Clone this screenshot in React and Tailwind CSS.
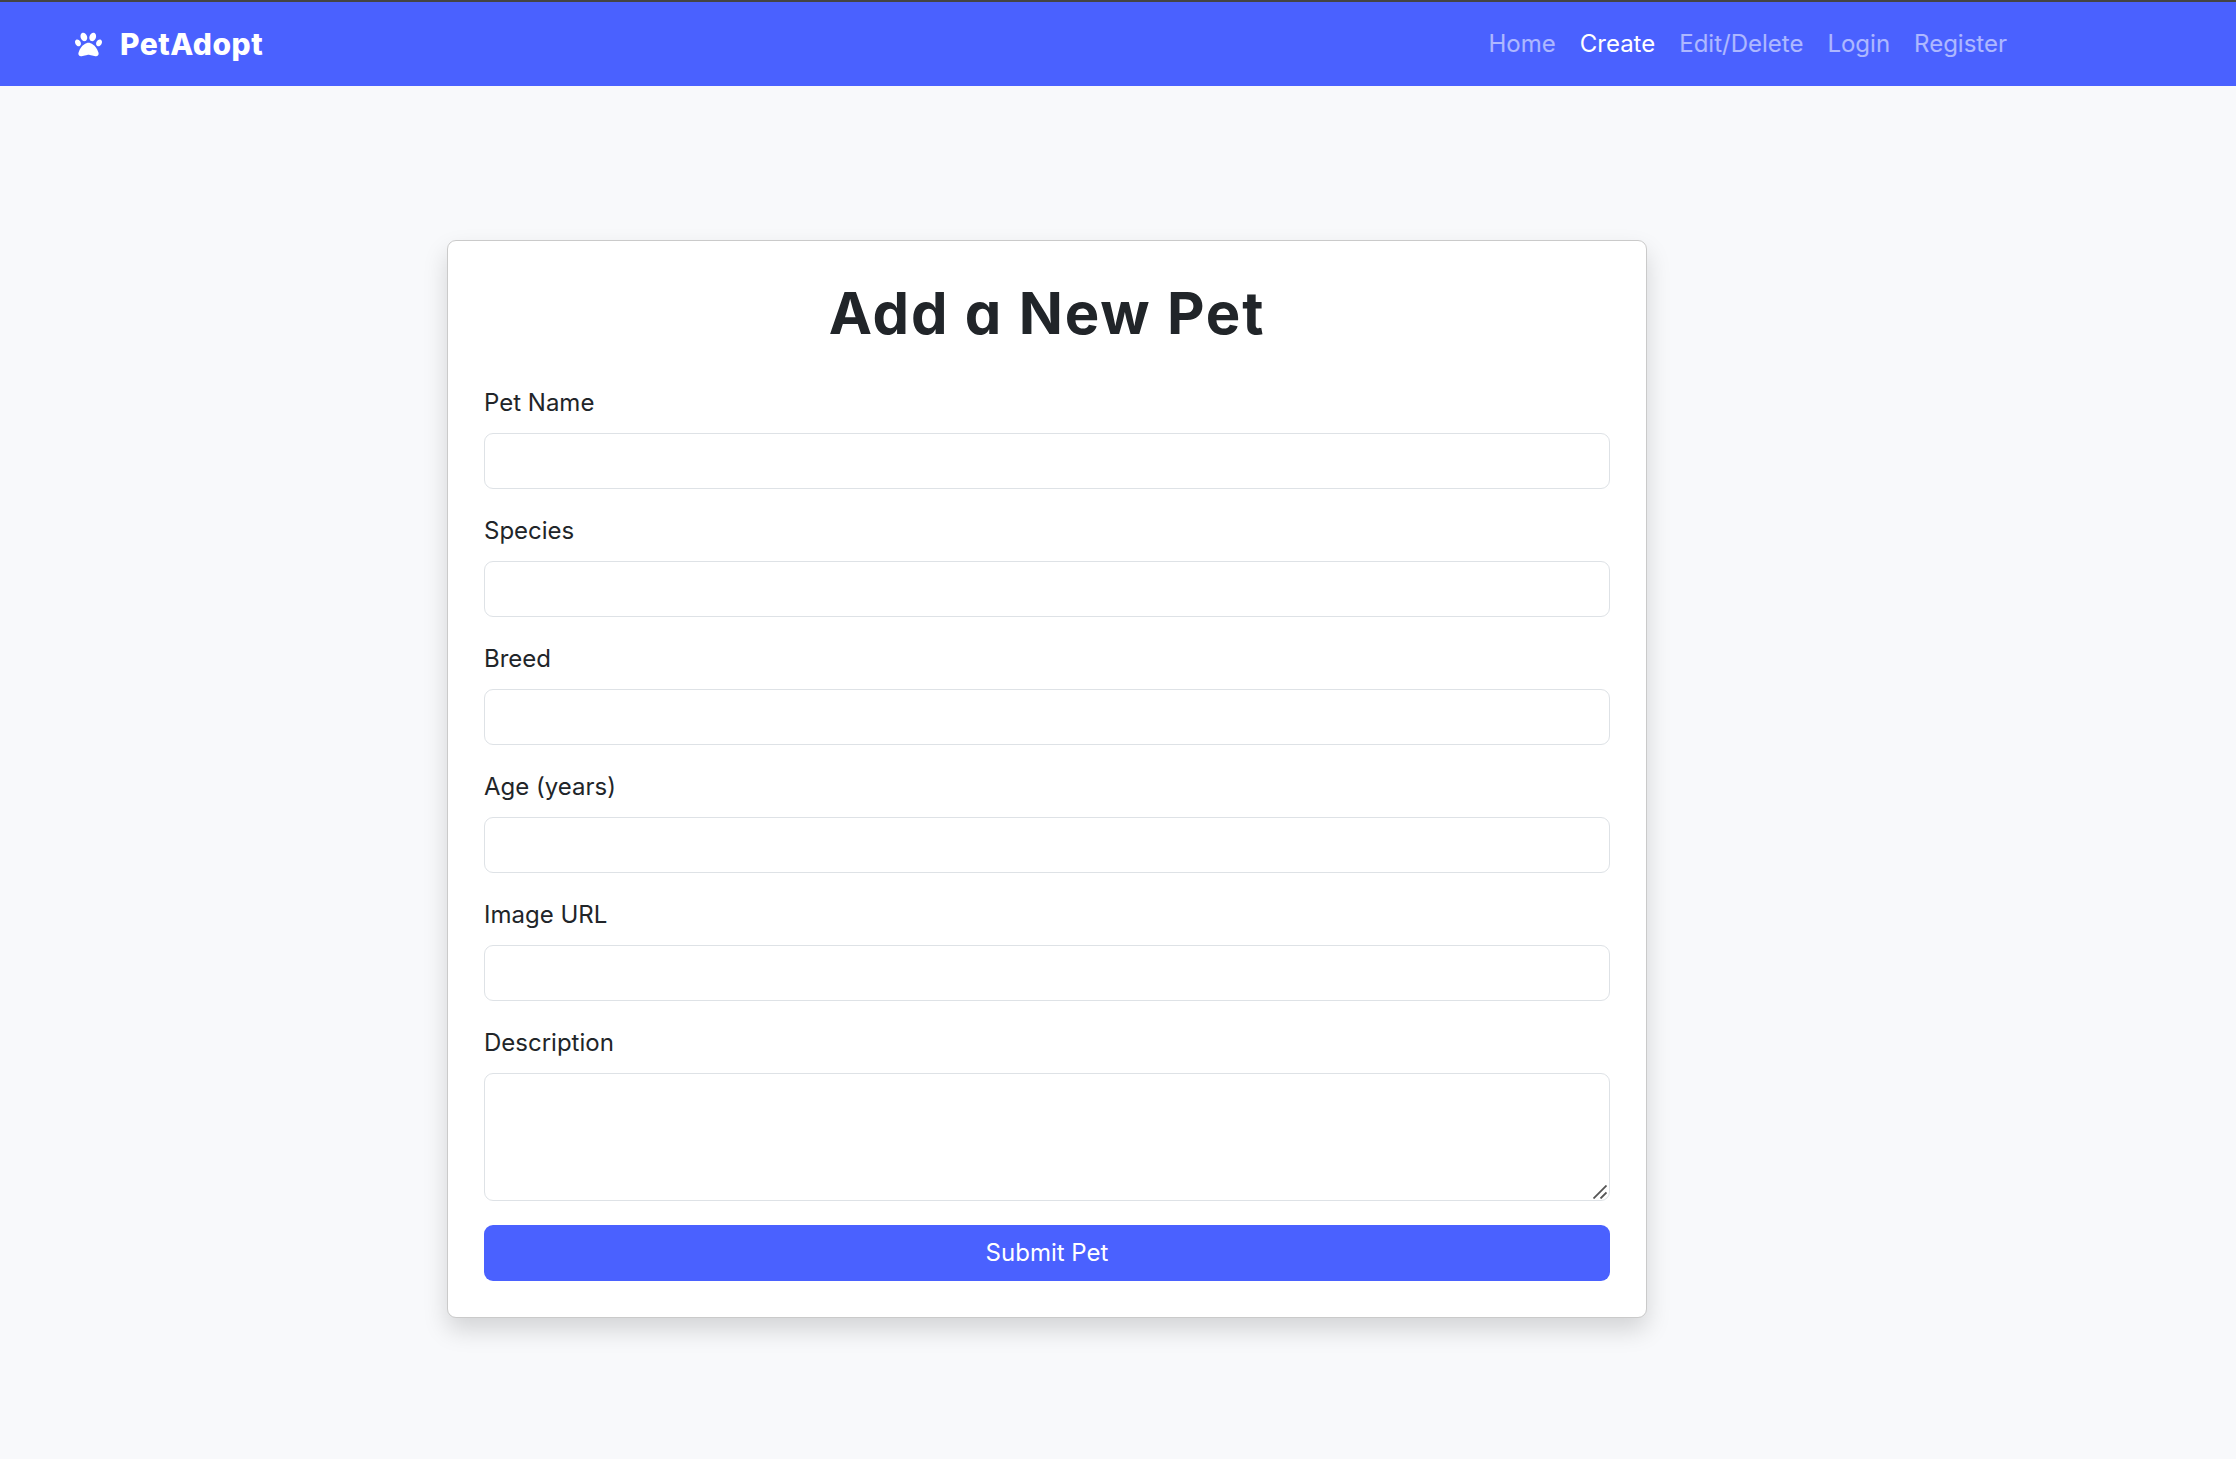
import { FaPaw } from "react-icons/fa6";

const links = ["Home", "Create", "Edit/Delete", "Login", "Register"];
const fields = ["Pet Name", "Species", "Breed", "Age (years)", "Image URL"];

function Navbar() {
  return (
    <nav className="flex h-[86px] items-center justify-between border-t-2 border-[#444444] bg-[#4a61ff] pr-[229px] pl-[75px]">
      <a className="flex items-center text-white">
        <FaPaw className="mt-[1px] h-[27px] w-[27px]" />
        <span className="ml-[18px] text-[30px] leading-[45px] font-extrabold tracking-[0.5px]">PetAdopt</span>
      </a>
      <div className="flex gap-6 text-2xl leading-9">
        {links.map((l) => (
          <a key={l} className={l === "Create" ? "text-white" : "text-white/55"}>
            {l}
          </a>
        ))}
      </div>
    </nav>
  );
}

export default function App() {
  return (
    <div className="min-h-[1459px] bg-[#f8f9fb] font-[Inter,sans-serif] text-[#212529]">
      <Navbar />
      <main className="mt-[154px] ml-[447px] w-[1200px] rounded-[9px] border border-[#cacaca] bg-white p-9 shadow-[0_12px_24px_rgba(0,0,0,0.15)]">
        <h1 className="mb-9 text-center text-[58px] leading-[72px] font-bold tracking-[1.8px] [font-feature-settings:'cv11']">
          Add a New Pet
        </h1>
        <form className="flex flex-col gap-6 text-2xl leading-9">
          {fields.map((f) => (
            <label key={f} className="flex flex-col gap-3">
              {f}
              <input className="h-14 rounded-[9px] border border-[#dee2e6] bg-white px-4" />
            </label>
          ))}
          <label className="relative flex flex-col gap-3">
            Description
            <textarea className="h-32 resize-none rounded-[9px] border border-[#dee2e6] bg-white px-4" />
            <svg className="absolute right-[3px] bottom-[2px] h-[14px] w-[14px]" viewBox="0 0 14 14" stroke="#555" strokeWidth="1.8">
              <path d="M.5 13.5 13.5.5M7.5 13.5l6-6" />
            </svg>
          </label>
          <button type="button" className="h-14 rounded-[9px] bg-[#4a61ff] text-white">
            Submit Pet
          </button>
        </form>
      </main>
    </div>
  );
}
